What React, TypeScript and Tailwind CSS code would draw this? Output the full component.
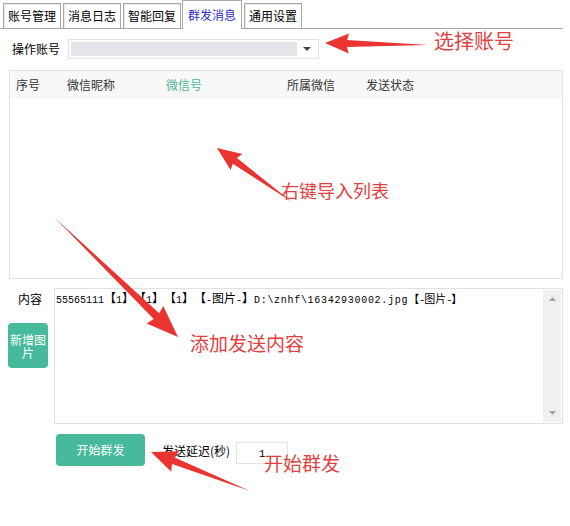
import React from "react";

const FONT = { fontFamily: '"Noto Sans CJK SC", "Noto Sans", sans-serif' };
const MONO = { fontFamily: '"Liberation Mono", monospace' };

function arrowPoints(
  x1: number, y1: number, x2: number, y2: number,
  L: number, W: number, w: number
) {
  const dx = x2 - x1, dy = y2 - y1;
  const len = Math.hypot(dx, dy);
  const ux = dx / len, uy = dy / len;
  const px = -uy, py = ux;
  const bx = x2 - ux * L, by = y2 - uy * L;
  const pts = [
    [x1, y1],
    [bx + px * w, by + py * w],
    [bx + px * W - ux * 2, by + py * W - uy * 2],
    [x2, y2],
    [bx - px * W - ux * 2, by - py * W - uy * 2],
    [bx - px * w, by - py * w],
  ];
  return pts.map((p) => p.map((v) => v.toFixed(1)).join(",")).join(" ");
}

function Wide({ text }: { text: string }) {
  return (
    <>
      {Array.from(text).map((c, i) =>
        /[\x00-\x7f]/.test(c) ? (
          <span key={i} className="inline-block w-[6px] text-[10px] text-center" style={MONO}>
            {c}
          </span>
        ) : (
          <span key={i} className="inline-block w-[12px] text-[12px] text-center" style={FONT}>
            {c}
          </span>
        )
      )}
    </>
  );
}

const tabs = ["账号管理", "消息日志", "智能回复", "群发消息", "通用设置"];

export default function App() {
  return (
    <div className="relative w-[570px] h-[526px] bg-white text-[12px] text-black overflow-hidden" style={FONT}>
      {/* tabs */}
      <div className="flex items-end h-[29px] w-[563px] border-b border-[#a8a8a8] pl-[3px] gap-[2px]">
        {tabs.map((t, i) =>
          i === 3 ? (
            <div
              key={t}
              className="h-[29px] -mb-px ml-[-1px] bg-white border-x border-t border-[#a8a8a8] px-[5px] flex items-center text-[#2b2bc8] leading-none"
            >
              {t}
            </div>
          ) : (
            <div
              key={t}
              className="h-[25px] border-x border-t border-[#a8a8a8] px-[4px] flex items-center leading-none shadow-[inset_1px_1px_0_#e8e8e8]"
            >
              {t}
            </div>
          )
        )}
      </div>

      {/* account row */}
      <div className="flex items-center mt-[10px] h-[20px]">
        <span className="ml-[12px] w-[56px] leading-none">操作账号</span>
        <div className="w-[251px] h-[20px] border border-[#e2e2e2] flex items-center p-[2px]">
          <div className="w-[226px] h-full bg-[#e4e4e9]" />
          <div className="flex-1 flex items-center justify-center">
            <svg width="8" height="5" viewBox="0 0 8 5">
              <path d="M0 0 L8 0 L4 4 Z" fill="#444" />
            </svg>
          </div>
        </div>
      </div>

      {/* list panel */}
      <div className="ml-[9px] mt-[11px] w-[554px] h-[209px] border border-[#e3e3e3]">
        <div className="h-[27px] bg-[#f8f8f8] flex items-center text-[#333]">
          <span className="ml-[6px] w-[51px]">序号</span>
          <span className="w-[99px]">微信昵称</span>
          <span className="w-[121px] text-[#4cb596]">微信号</span>
          <span className="w-[79px]">所属微信</span>
          <span>发送状态</span>
        </div>
      </div>

      {/* content area */}
      <div className="flex mt-[9px]">
        <div className="w-[46px] ml-[5px] flex flex-col items-center">
          <span className="mt-[5px] ml-[4px] leading-none">内容</span>
          <button className="mt-[18px] w-[40px] h-[45px] rounded-[4px] bg-[#46ba9a] text-white text-[12px] leading-[13px] flex items-center justify-center px-[2px]">
            新增图片
          </button>
        </div>
        <div className="ml-[3px] w-[509px] h-[136px] border border-[#e0e0e0] flex">
          <div className="flex-1 pl-[1px] pt-[2px] leading-[13px] whitespace-nowrap">
            <Wide text="55565111【1】【1】【1】【-图片-】" />
            <span className="text-[10px] tracking-[0.7px]" style={MONO}>
              D:\znhf\16342930002.jpg
            </span>
            <span className="inline-block w-[11px] text-[11px]" style={FONT}>【</span>
            <span className="inline-block w-[5px] text-[10px]" style={MONO}>-</span>
            <span className="inline-block w-[11px] text-[11px]" style={FONT}>图</span>
            <span className="inline-block w-[11px] text-[11px]" style={FONT}>片</span>
            <span className="inline-block w-[5px] text-[10px]" style={MONO}>-</span>
            <span className="inline-block w-[7px] text-[11px]" style={FONT}>】</span>
          </div>
          <div className="w-[18px] my-[1px] mr-[1px] bg-[#f0f0f0] flex flex-col items-center justify-between py-[7px]">
            <svg width="7" height="4" viewBox="0 0 7 4">
              <path d="M0 4 L7 4 L3.5 0 Z" fill="#a0a0a0" />
            </svg>
            <svg width="7" height="4" viewBox="0 0 7 4">
              <path d="M0 0 L7 0 L3.5 4 Z" fill="#a0a0a0" />
            </svg>
          </div>
        </div>
      </div>

      {/* bottom row */}
      <div className="flex items-center mt-[10px] ml-[56px]">
        <button className="w-[89px] h-[32px] rounded-[4px] bg-[#46ba9a] text-white text-[12px]">开始群发</button>
        <span className="ml-[17px] mt-[2px]">发送延迟(秒)</span>
        <div className="ml-[6px] mt-[6px] w-[52px] h-[22px] border border-[#e2e2e2] flex items-center justify-center text-[11px]" style={MONO}>
          <span className="mt-[2px]">1</span>
        </div>
      </div>

      {/* annotations overlay */}
      <svg className="absolute left-0 top-0 pointer-events-none" width="570" height="526">
        <polygon points={arrowPoints(428, 45, 325, 43, 22, 10, 3.5)} fill="#ea3432" />
        <polygon points={arrowPoints(292, 202, 217, 148, 22, 10, 3.5)} fill="#ea3432" />
        <polygon points={arrowPoints(56, 219, 178, 337, 30, 12, 4)} fill="#ea3432" />
        <polygon points={arrowPoints(250, 491, 151, 452, 24, 11, 3.5)} fill="#ea3432" />
      </svg>
      <div className="absolute left-[434px] top-[28px] text-[20px] leading-[26px] text-[#e2403f]">选择账号</div>
      <div className="absolute left-[281px] top-[177px] text-[18px] leading-[26px] text-[#e2403f]">右键导入列表</div>
      <div className="absolute left-[190px] top-[330px] text-[19px] leading-[26px] text-[#e2403f]">添加发送内容</div>
      <div className="absolute left-[264px] top-[450px] text-[19px] leading-[26px] text-[#e2403f]">开始群发</div>
    </div>
  );
}
